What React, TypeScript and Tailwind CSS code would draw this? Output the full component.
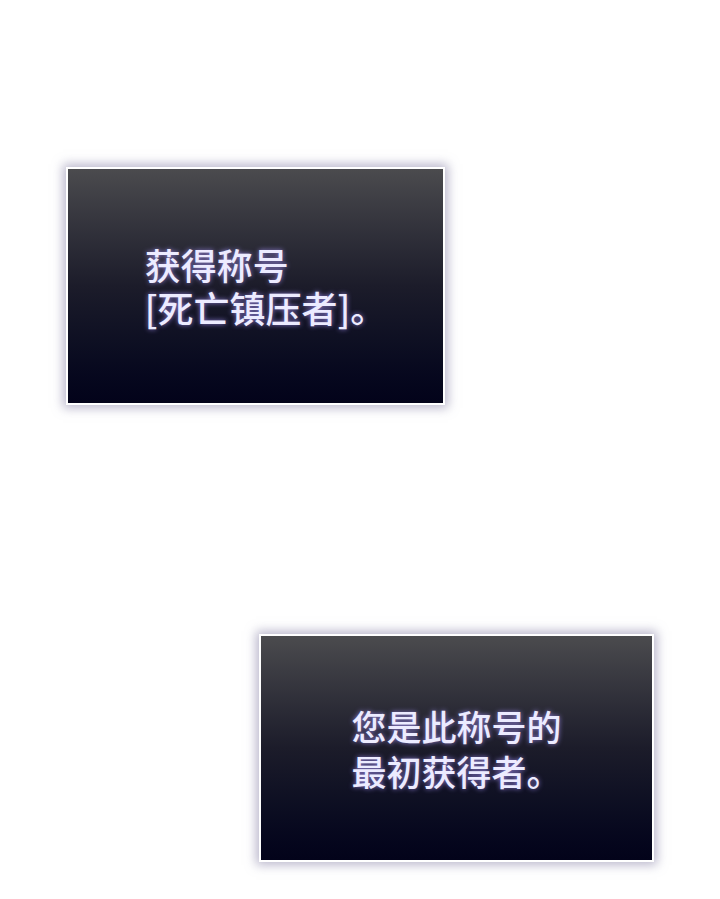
const boxClass =
  "flex items-center justify-center border-2 border-white bg-gradient-to-b from-[#4b4b4e] via-[#1c1c2a] to-[#03031a] shadow-[0_0_10px_3px_rgba(140,135,170,0.6)]";

const glow = "[text-shadow:0_0_5px_rgba(170,150,255,0.8)]";

const App = () => {
  return (
    <div
      className="h-[899px] w-[720px] overflow-hidden bg-white"
      style={{ fontFamily: '"Noto Sans CJK SC", "Noto Sans", sans-serif' }}
    >
      <div className="flex flex-col">
        <div className={`ml-[66px] mt-[167px] h-[238px] w-[379px] ${boxClass}`}>
          <p
            className={`pl-[20px] text-left text-[36px] font-medium leading-[43px] text-[#ecebff] ${glow}`}
          >
            获得称号
            <br />
            [死亡镇压者]。
          </p>
        </div>

        <div className={`ml-[259px] mt-[229px] h-[228px] w-[395px] ${boxClass}`}>
          <p
            className={`text-left text-[35px] font-medium leading-[45px] text-[#ecebff] ${glow}`}
          >
            您是此称号的
            <br />
            最初获得者。
          </p>
        </div>
      </div>
    </div>
  );
};

export default App;
